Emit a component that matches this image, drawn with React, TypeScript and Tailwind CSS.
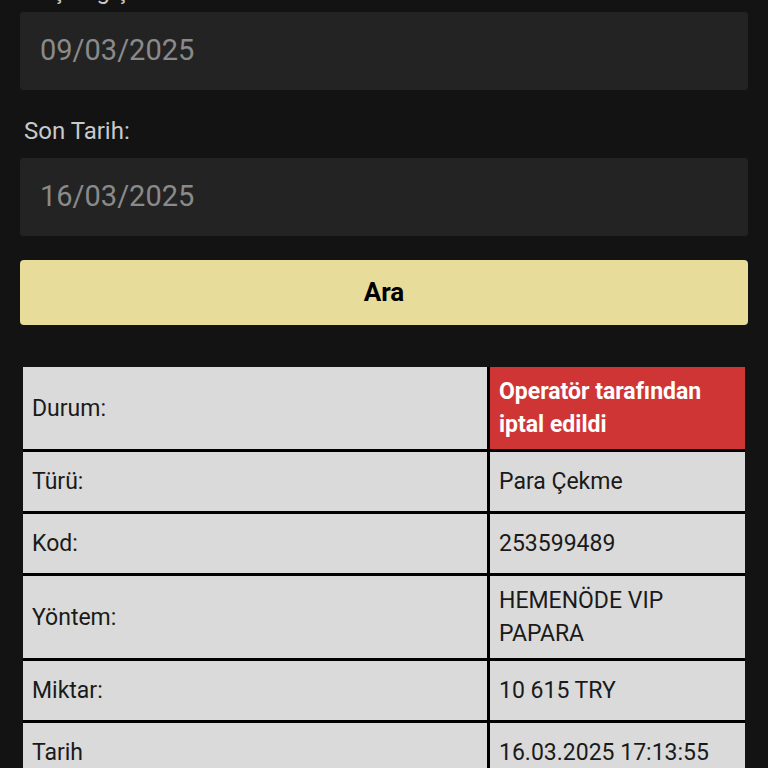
import React from 'react';

const rows: { label: string; value: string; danger?: boolean }[] = [
  { label: 'Durum:', value: 'Operatör tarafından iptal edildi', danger: true },
  { label: 'Türü:', value: 'Para Çekme' },
  { label: 'Kod:', value: '253599489' },
  { label: 'Yöntem:', value: 'HEMENÖDE VIP PAPARA' },
  { label: 'Miktar:', value: '10 615 TRY' },
  { label: 'Tarih', value: '16.03.2025 17:13:55' },
];

function DateField({ label, value, first }: { label: string; value: string; first?: boolean }) {
  return (
    <div className="flex flex-col">
      <label
        className={`pl-1 text-[24px] leading-[28px] text-[#c9c9c9] ${first ? '-mt-[23px] mb-[7px]' : 'mt-[27px] mb-[13px]'}`}
      >
        {label}
      </label>
      <div className="h-[78px] rounded-[3px] bg-[#232323] pl-5 flex items-center text-[29px] text-[#8a8a8a]">
        {value}
      </div>
    </div>
  );
}

export default function App() {
  return (
    <div
      className="min-h-screen bg-[#131313] px-5 overflow-hidden"
      style={{ fontFamily: 'Roboto, "Liberation Sans", sans-serif' }}
    >
      <div className="flex flex-col">
        <DateField first label="Başlangıç Tarihi:" value="09/03/2025" />
        <DateField label="Son Tarih:" value="16/03/2025" />

        <button className="mt-6 w-full h-[65px] rounded-[4px] bg-[#e8dc9a] text-[26px] font-bold text-black">
          Ara
        </button>

        {/* details table: black gaps between cells only */}
        <div className="mt-[39px] p-[3px]">
          <div className="grid grid-cols-[464px_1fr] gap-[3px] bg-black">
            {rows.map(r => (
              <React.Fragment key={r.label}>
                <div className="min-h-[59px] bg-[#dadada] px-[9px] py-2 flex items-center text-[23px] leading-[33px] text-[#1a1a1a]">
                  {r.label}
                </div>
                <div
                  className={`min-h-[59px] px-[9px] py-2 flex items-center text-[23px] leading-[33px] ${
                    r.danger ? 'bg-[#d03535] font-bold text-white' : 'bg-[#dadada] text-[#1a1a1a]'
                  }`}
                >
                  {r.value}
                </div>
              </React.Fragment>
            ))}
          </div>
        </div>
      </div>
    </div>
  );
}
